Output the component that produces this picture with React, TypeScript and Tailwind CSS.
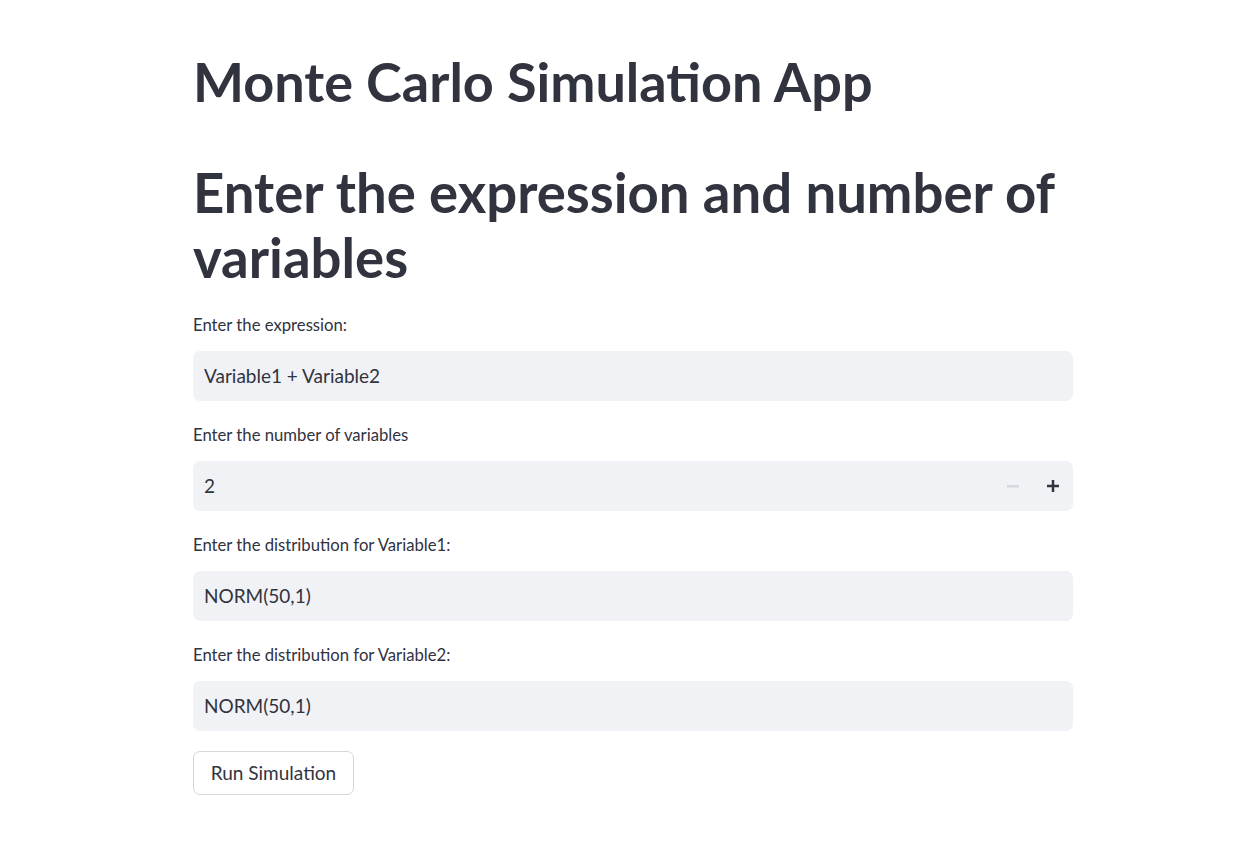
const font = { fontFamily: "Lato, 'Noto Sans', sans-serif" };

type FieldProps = {
  label: string;
  value: string;
  stepper?: boolean;
};

const Field = ({ label, value, stepper }: FieldProps) => {
  return (
    <div className="mt-[22px] first:mt-[23px]">
      <div className="h-[25px] leading-[25px] text-[16.7px] text-[#31333f]">{label}</div>
      <div className="mt-[13px] h-[50px] rounded-[7px] bg-[#f0f2f6] flex items-center">
        <div className="flex-1 pl-[11px] text-[19px] text-[#31333f]">{value}</div>
        {stepper && (
          <div className="flex h-full">
            <div className="w-[40px] flex items-center justify-center">
              <svg width="12" height="12" viewBox="0 0 12 12">
                <rect x="0" y="5" width="12" height="2.5" fill="#d5d7dc" />
              </svg>
            </div>
            <div className="w-[40px] flex items-center justify-center">
              <svg width="12" height="12" viewBox="0 0 12 12">
                <rect x="0" y="4.75" width="12" height="2.5" fill="#31333f" />
                <rect x="4.75" y="0" width="2.5" height="12" fill="#31333f" />
              </svg>
            </div>
          </div>
        )}
      </div>
    </div>
  );
};

const App = () => {
  return (
    <div className="min-h-[841px] bg-white" style={font}>
      <div className="ml-[193px] w-[880px] pt-[49px]">
        <h1 className="text-[54px] leading-[66px] font-bold text-[#31333f]">
          Monte Carlo Simulation App
        </h1>
        <h1 className="mt-[45px] text-[54.5px] leading-[65px] font-bold text-[#31333f]">
          Enter the expression and number of variables
        </h1>
        <div>
          <Field label="Enter the expression:" value="Variable1 + Variable2" />
          <Field label="Enter the number of variables" value="2" stepper />
          <Field label="Enter the distribution for Variable1:" value="NORM(50,1)" />
          <Field label="Enter the distribution for Variable2:" value="NORM(50,1)" />
        </div>
        <button className="mt-[20px] h-[44px] w-[161px] rounded-[7px] border border-[#d6d6d9] bg-white text-[19px] text-[#31333f]">
          Run Simulation
        </button>
      </div>
    </div>
  );
};

export default App;
